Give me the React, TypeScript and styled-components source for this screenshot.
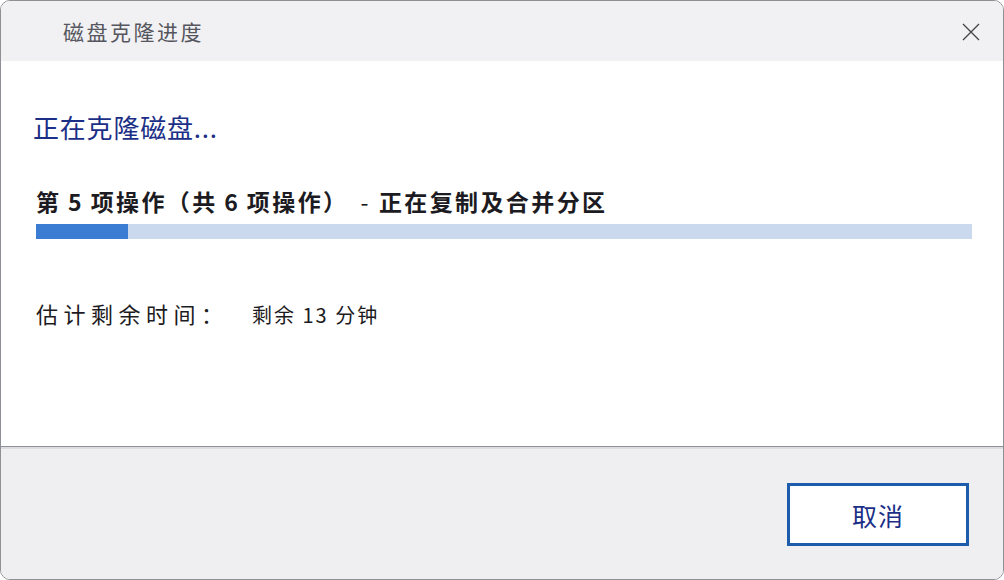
import styled, { createGlobalStyle } from 'styled-components';

const GlobalStyle = createGlobalStyle`
  html, body {
    margin: 0;
    padding: 0;
    background: #ffffff;
  }
  body {
    font-family: "Noto Sans CJK SC", "Noto Sans", sans-serif;
    text-spacing-trim: space-all;
  }
`;

type Step = {
  current: number;
  total: number;
  label: string;
};

const step: Step = { current: 5, total: 6, label: '正在复制及合并分区' };
const progress = 0.098;

function App () {
  return (
    <>
      <GlobalStyle />
      <Window>
        <TitleBar>
          <Title>磁盘克隆进度</Title>
          <CloseButton aria-label="关闭">
            <svg width="20" height="20" viewBox="0 0 20 20">
              <path d="M2 2 L18 18 M18 2 L2 18" stroke="#444" strokeWidth="1.3" fill="none" />
            </svg>
          </CloseButton>
        </TitleBar>

        <Body>
          <Heading>正在克隆磁盘...</Heading>

          <StepLine>
            第 {step.current} 项操作（共 {step.total} 项操作）<Dash>-</Dash>{step.label}
          </StepLine>
          <ProgressTrack>
            <ProgressFill style={{ width: `${progress * 100}%` }} />
          </ProgressTrack>

          <TimeRow>
            <TimeLabel>估计剩余时间：</TimeLabel>
            <TimeValue>剩余 13 分钟</TimeValue>
          </TimeRow>
        </Body>

        <Footer>
          <CancelButton>取消</CancelButton>
        </Footer>
      </Window>
    </>
  );
}

const Window = styled.div`
  width: 1004px;
  height: 580px;
  box-sizing: border-box;
  border: 1.5px solid #8f8f96;
  border-radius: 10px;
  overflow: hidden;
  display: flex;
  flex-direction: column;
  background: #ffffff;
`;

const TitleBar = styled.div`
  height: 60px;
  flex-shrink: 0;
  background: #f1f1f3;
  display: flex;
  align-items: center;
  justify-content: space-between;
  padding: 0 20px 0 62px;
`;

const Title = styled.span`
  font-size: 21px;
  letter-spacing: 2.5px;
  color: #56565e;
`;

const CloseButton = styled.button`
  border: none;
  background: none;
  padding: 0;
  width: 24px;
  height: 24px;
  display: grid;
  place-items: center;
  margin-top: 2px;
`;

const Body = styled.div`
  flex: 1;
  background: #ffffff;
  padding: 0 31px 0 35px;
  display: flex;
  flex-direction: column;
  border-bottom: 1px solid #8f8f96;
`;

const Heading = styled.h1`
  margin: 48px 0 0 -3px;
  font-size: 26px;
  font-weight: 400;
  letter-spacing: 0.8px;
  line-height: 36px;
  color: #1b2f86;
`;

const StepLine = styled.div`
  margin-top: 41px;
  font-size: 23px;
  font-weight: 700;
  letter-spacing: 2.4px;
  word-spacing: -1px;
  line-height: 30px;
  color: #1d1b22;
`;

const Dash = styled.span`
  font-weight: 400;
  margin: 0 8px 0 12px;
`;

const ProgressTrack = styled.div`
  margin-top: 8px;
  height: 15px;
  background: #cbd9ef;
`;

const ProgressFill = styled.div`
  height: 100%;
  background: #3a7dd2;
`;

const TimeRow = styled.div`
  margin-top: 58px;
  display: flex;
  align-items: baseline;
  color: #1d1b22;
`;

const TimeLabel = styled.span`
  font-size: 22px;
  letter-spacing: 5.5px;
  width: 216px;
`;

const TimeValue = styled.span`
  font-size: 20px;
  letter-spacing: 2px;
`;

const Footer = styled.div`
  height: 132px;
  flex-shrink: 0;
  box-sizing: border-box;
  background: #efeff1;
  border-top: 2px solid #dcdde3;
  display: flex;
  justify-content: flex-end;
  align-items: flex-start;
  padding: 34px 34px 0 0;
`;

const CancelButton = styled.button`
  width: 182px;
  height: 63px;
  box-sizing: border-box;
  border: 3px solid #1d5caa;
  background: #ffffff;
  color: #1b2f86;
  font-family: "Noto Sans CJK SC", "Noto Sans", sans-serif;
  font-size: 25px;
  letter-spacing: 1px;
  cursor: pointer;
`;

export default App;
